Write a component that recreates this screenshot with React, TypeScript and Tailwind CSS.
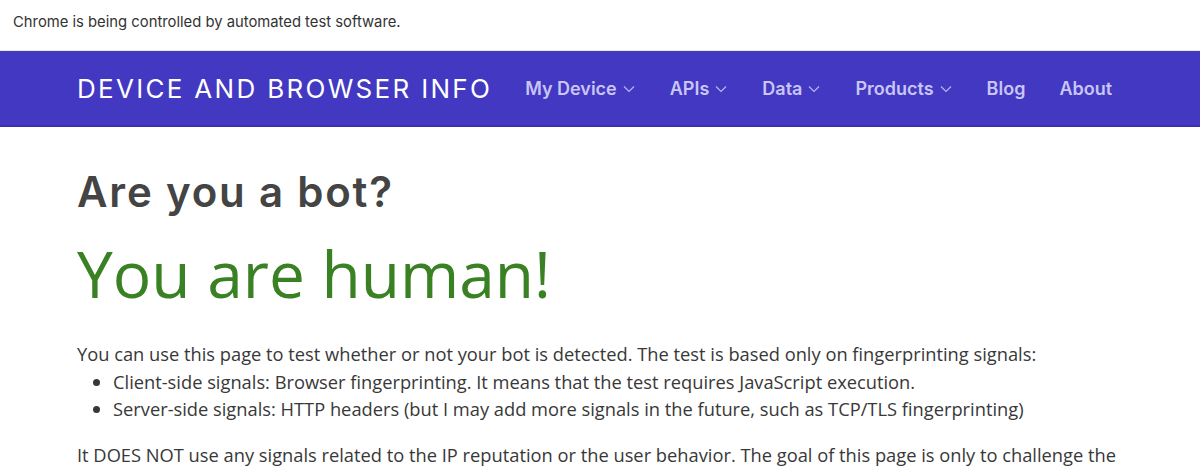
import React from "react";

const Chevron = () => (
  <svg width="14" height="14" viewBox="0 0 14 14" className="ml-[5px] mt-[2px] shrink-0" fill="none">
    <path d="M2 4.5 L7 9.5 L12 4.5" stroke="#b9b5f0" strokeWidth="1.2" />
  </svg>
);

const NavItem = ({ label, chevron }: { label: string; chevron?: boolean }) => (
  <div className="flex items-center shrink-0 whitespace-nowrap">
    <span>{label}</span>
    {chevron && <Chevron />}
  </div>
);

export default function App() {
  return (
    <div className="min-h-screen bg-white">
      <div
        className="h-[51px] flex items-start pt-[12px] pl-[13px] text-[14.8px] leading-[20px] text-[#333] bg-white border-b border-[#e6e6e6]"
        style={{ fontFamily: "Inter, 'Liberation Sans', sans-serif" }}
      >
        Chrome is being controlled by automated test software.
      </div>
      <div
        className="h-[76px] bg-[#4338c2] border-b-2 border-[#3a30b3] flex items-center"
        style={{ fontFamily: "Inter, 'Liberation Sans', sans-serif" }}
      >
        <div className="w-[1046px] mx-auto flex items-center whitespace-nowrap">
          <div className="shrink-0 text-white text-[26px] tracking-[2.3px] font-normal">DEVICE AND BROWSER INFO</div>
          <div className="flex items-center gap-[34px] ml-[33px] text-[18px] font-semibold text-[#c9c5f5]">
            <NavItem label="My Device" chevron />
            <NavItem label="APIs" chevron />
            <NavItem label="Data" chevron />
            <NavItem label="Products" chevron />
            <NavItem label="Blog" />
            <NavItem label="About" />
          </div>
        </div>
      </div>
      <div className="w-[1046px] mx-auto pt-[40px]">
        <h1
          className="text-[42px] font-semibold text-[#444] leading-[1.2] tracking-[1.8px]"
          style={{ fontFamily: "Inter, 'Liberation Sans', sans-serif" }}
        >
          Are you a bot?
        </h1>
        <h2
          className="text-[64px] text-[#3a8124] leading-[1.2] mt-[19px]"
          style={{ fontFamily: "'Open Sans', sans-serif" }}
        >
          You are human!
        </h2>
        <div className="text-[18.3px] leading-[27.5px] text-[#383838] mt-[27px]" style={{ fontFamily: "'Open Sans', sans-serif" }}>
          <p>You can use this page to test whether or not your bot is detected. The test is based only on fingerprinting signals:</p>
          <ul className="list-disc pl-[36px]">
            <li>Client-side signals: Browser fingerprinting. It means that the test requires JavaScript execution.</li>
            <li>Server-side signals: HTTP headers (but I may add more signals in the future, such as TCP/TLS fingerprinting)</li>
          </ul>
          <p className="mt-[18px]">
            It DOES NOT use any signals related to the IP reputation or the user behavior. The goal of this page is only to challenge the
            fingerprint of your bot.
          </p>
        </div>
      </div>
    </div>
  );
}
